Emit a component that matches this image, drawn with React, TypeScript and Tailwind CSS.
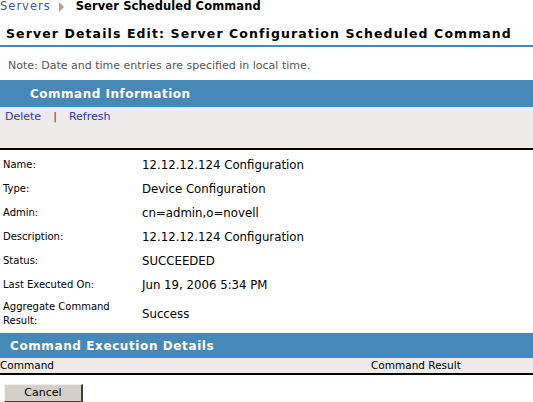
const rows: { label: string; value: string }[] = [
  { label: 'Name:', value: '12.12.12.124 Configuration' },
  { label: 'Type:', value: 'Device Configuration' },
  { label: 'Admin:', value: 'cn=admin,o=novell' },
  { label: 'Description:', value: '12.12.12.124 Configuration' },
  { label: 'Status:', value: 'SUCCEEDED' },
  { label: 'Last Executed On:', value: 'Jun 19, 2006 5:34 PM' },
];

export default function App() {
  return (
    <div className="w-[533px] h-[402px] overflow-hidden bg-white text-black font-['DejaVu_Sans',sans-serif]">
      {/* Breadcrumb */}
      <div className="h-[13px] flex items-center text-[11.5px] leading-[13px]">
        <span className="text-[#3e55a6] tracking-[1px]">Servers</span>
        <span className="ml-[8px] mr-[12px] w-0 h-0 border-y-[5px] border-y-transparent border-l-[5px] border-l-[#a8a49c]" />
        <span className="font-bold tracking-[0.1px]">Server Scheduled Command</span>
      </div>

      {/* Title */}
      <div className="mt-[13px] h-[21px] px-[6px] border-b-2 border-[#4589bb] text-[12.5px] font-bold leading-[15px] tracking-[1.1px]">
        Server Details Edit: Server Configuration Scheduled Command
      </div>

      {/* Note */}
      <div className="mt-[12px] px-[8px] text-[11px] leading-[14px] text-[#555]">
        Note: Date and time entries are specified in local time.
      </div>

      {/* Command Information */}
      <div className="mt-[7px] h-[27px] bg-[#4689b9] flex items-center pl-[30px] text-white font-bold text-[12px] tracking-[0.5px]">
        Command Information
      </div>
      <div className="h-[43px] bg-[#eeecea] border-b-2 border-black px-[5px] pt-[3px] text-[11px] leading-[14px] text-[#2b3a98]">
        <span>Delete</span>
        <span className="mx-[12px] text-[#5b1e6e]">|</span>
        <span>Refresh</span>
      </div>

      <div className="mt-[3px]">
        {rows.map((r) => (
          <div key={r.label} className="flex items-center h-[24px]">
            <div className="w-[142px] pl-[3px] text-[10px] leading-[14px]">{r.label}</div>
            <div className="text-[11.75px] leading-[14px]">{r.value}</div>
          </div>
        ))}
        <div className="flex items-center h-[34px]">
          <div className="w-[142px] pl-[3px] pr-[30px] text-[10px] leading-[14px]">Aggregate Command Result:</div>
          <div className="text-[11.75px] leading-[14px]">Success</div>
        </div>
      </div>

      {/* Command Execution Details */}
      <div className="mt-[2px] h-[25px] bg-[#4689b9] flex items-center pl-[10px] text-white font-bold text-[12px] tracking-[0.6px]">
        Command Execution Details
      </div>
      <div className="h-[17px] bg-[#eeecea] border-b-2 border-black flex items-center text-[10.5px]">
        <div className="w-[371px]">Command</div>
        <div>Command Result</div>
      </div>

      <div className="mt-[4px] pl-[4px]">
        <button className="w-[79px] h-[19px] bg-[#d4d0c8] border-t border-l border-t-[#eee] border-l-[#eee] border-r-2 border-b-2 border-r-[#404040] border-b-[#404040] text-[11px] leading-none">
          Cancel
        </button>
      </div>
    </div>
  );
}
